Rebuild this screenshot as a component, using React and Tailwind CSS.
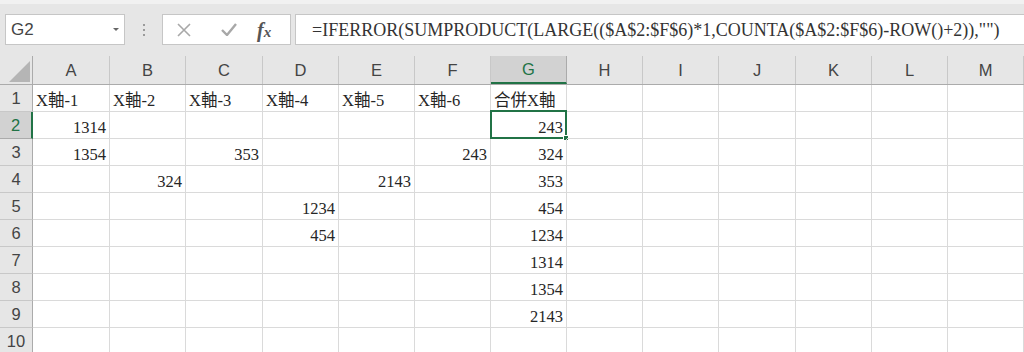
import React from "react";

const COLS = [
  { k: "A", w: 77 },
  { k: "B", w: 76 },
  { k: "C", w: 77 },
  { k: "D", w: 76 },
  { k: "E", w: 76 },
  { k: "F", w: 76 },
  { k: "G", w: 76 },
  { k: "H", w: 76 },
  { k: "I", w: 76 },
  { k: "J", w: 77 },
  { k: "K", w: 76 },
  { k: "L", w: 76 },
  { k: "M", w: 76 },
];

const DATA = {
  1: { A: "X軸-1", B: "X軸-2", C: "X軸-3", D: "X軸-4", E: "X軸-5", F: "X軸-6", G: "合併X軸" },
  2: { A: 1314, G: 243 },
  3: { A: 1354, C: 353, F: 243, G: 324 },
  4: { B: 324, E: 2143, G: 353 },
  5: { D: 1234, G: 454 },
  6: { D: 454, G: 1234 },
  7: { G: 1314 },
  8: { G: 1354 },
  9: { G: 2143 },
  10: {},
};

const SERIF = { fontFamily: '"Liberation Serif","Noto Sans CJK TC",serif' };
const SANS = { fontFamily: '"Liberation Sans","Noto Sans",sans-serif' };

function Cell({ col, row }) {
  const v = DATA[row][col.k];
  const isNum = typeof v === "number";
  const selected = col.k === "G" && row === 2;
  return (
    <div
      className={`relative h-full shrink-0 border-r border-b border-[#dadada] flex items-end pb-[2px] ${
        isNum ? "justify-end pr-[3px]" : "justify-start pl-[3px]"
      }`}
      style={{ width: col.w }}
    >
      {v !== undefined && (
        <span className="text-[16.5px] leading-none text-[#262626] whitespace-nowrap" style={SERIF}>
          {v}
        </span>
      )}
      {selected && (
        <div className="absolute -left-[1px] -top-[2px] right-[-1px] bottom-[-1px] border-2 border-[#217346] pointer-events-none">
          <div className="absolute -right-[4px] -bottom-[4px] w-[6px] h-[6px] bg-[#217346] border border-white" />
        </div>
      )}
    </div>
  );
}

export default function App() {
  return (
    <div className="w-[1024px] h-[352px] overflow-hidden bg-white" style={SANS}>
      {/* formula bar area */}
      <div className="h-[56px] bg-[#e6e6e6] border-t-[4px] border-[#f1f1f1] flex items-start pt-[10px]">
        <div className="ml-[5px] w-[120px] h-[31px] bg-white border border-[#c6c6c6] flex items-center justify-between pl-[5px] pr-[5px]">
          <span className="text-[17px] text-[#444]" style={SANS}>G2</span>
          <svg width="6" height="3" viewBox="0 0 6 3">
            <path d="M0 0 L6 0 L3 3 Z" fill="#666" />
          </svg>
        </div>
        <div className="w-[37px] h-[31px] flex flex-col items-center justify-center gap-[3px]">
          <div className="w-[2px] h-[2px] bg-[#9a9a9a]" />
          <div className="w-[2px] h-[2px] bg-[#9a9a9a]" />
          <div className="w-[2px] h-[2px] bg-[#9a9a9a]" />
        </div>
        <div className="w-[129px] h-[31px] bg-white border border-[#c6c6c6] flex items-center">
          <svg className="ml-[14px]" width="14" height="14" viewBox="0 0 14 14">
            <path d="M1 1 L13 13 M13 1 L1 13" stroke="#a8a8a8" strokeWidth="1.6" />
          </svg>
          <svg className="ml-[30px]" width="16" height="13" viewBox="0 0 16 13">
            <path d="M1 7 L6 12 L15 1" stroke="#a8a8a8" strokeWidth="2.4" fill="none" />
          </svg>
          <span className="ml-[20px] italic font-bold text-[#555] leading-none" style={{ fontFamily: '"Liberation Serif",serif' }}>
            <span className="text-[20px]">f</span><span className="text-[15px]">x</span>
          </span>
        </div>
        <div className="ml-[4px] flex-1 h-[31px] bg-white border border-[#c6c6c6] border-r-0 flex items-center pl-[16px]">
          <span className="text-[18px] text-[#333] whitespace-nowrap leading-none" style={SERIF}>
            =IFERROR(SUMPRODUCT(LARGE(($A$2:$F$6)*1,COUNTA($A$2:$F$6)-ROW()+2)),"")
          </span>
        </div>
      </div>

      {/* column headers */}
      <div className="flex h-[29px] bg-[#e6e6e6] border-b border-[#ababab]">
        <div className="relative w-[33px] h-full shrink-0 border-r border-[#ababab]">
          <svg className="absolute right-[2px] bottom-[2px]" width="21" height="21" viewBox="0 0 21 21">
            <path d="M21 0 L21 21 L0 21 Z" fill="#b5b5b5" />
          </svg>
        </div>
        {COLS.map((c) => {
          const sel = c.k === "G";
          return (
            <div
              key={c.k}
              className={`shrink-0 h-full flex items-center justify-center text-[16.5px] border-r ${
                sel
                  ? "bg-[#d2d2d2] text-[#217346] border-[#ababab] border-b-2 border-b-[#217346] -mb-[1px]"
                  : "text-[#444] border-[#c8c8c8]"
              }`}
              style={{ width: c.w }}
            >
              {c.k}
            </div>
          );
        })}
      </div>

      {/* rows */}
      {[1, 2, 3, 4, 5, 6, 7, 8, 9, 10].map((r) => {
        const sel = r === 2;
        return (
          <div key={r} className="flex h-[27px]">
            <div
              className={`w-[33px] shrink-0 h-full flex items-center justify-center text-[16.5px] border-b ${
                sel
                  ? "bg-[#d2d2d2] text-[#217346] border-r-2 border-r-[#217346] border-b-[#ababab]"
                  : "bg-[#e6e6e6] text-[#444] border-r border-r-[#ababab] border-b-[#c8c8c8]"
              }`}
            >
              {r}
            </div>
            {COLS.map((c) => (
              <Cell key={c.k} col={c} row={r} />
            ))}
          </div>
        );
      })}
    </div>
  );
}
